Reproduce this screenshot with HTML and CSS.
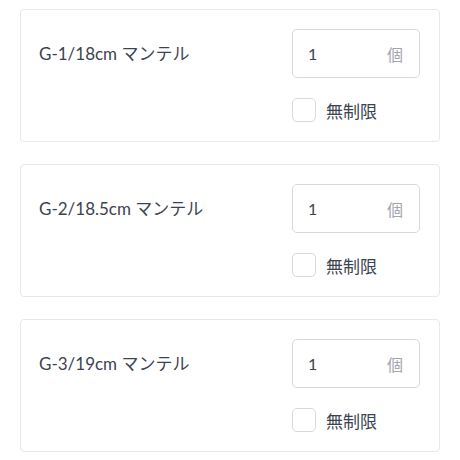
FILE: index.html
```html
<!DOCTYPE html>
<html lang="ja">
<head>
  <meta charset="UTF-8" />
  <meta name="viewport" content="width=device-width, initial-scale=1.0"/>
  <title>在庫設定</title>
  <link rel="stylesheet" href="styles.css">
</head>
<body>

  <div class="item">
    <div class="item-name">G-1/18cm マンテル</div>
    <div class="item-stock">
      <div class="qty"><span class="qty-value">1</span><span class="qty-unit">個</span></div>
      <label class="unlimited"><span class="check"></span>無制限</label>
    </div>
  </div>

  <div class="item">
    <div class="item-name">G-2/18.5cm マンテル</div>
    <div class="item-stock">
      <div class="qty"><span class="qty-value">1</span><span class="qty-unit">個</span></div>
      <label class="unlimited"><span class="check"></span>無制限</label>
    </div>
  </div>

  <div class="item">
    <div class="item-name">G-3/19cm マンテル</div>
    <div class="item-stock">
      <div class="qty"><span class="qty-value">1</span><span class="qty-unit">個</span></div>
      <label class="unlimited"><span class="check"></span>無制限</label>
    </div>
  </div>

</body>
</html>
```

FILE: styles.css
```css
body {
  margin: 0;
  padding: 9px 20px 0 20px;
  background-color: #fff;
  color: #3b4350;
  font-family: Lato, "Noto Sans CJK JP", sans-serif;
}
.item {
  display: flex;
  justify-content: space-between;
  border: 1px solid #e6e8ea;
  border-radius: 4px;
  padding: 19px 19px 19px 18px;
  margin-bottom: 22px;
}
.item-name {
  font-size: 17px;
  line-height: 49px;
}
.item-stock {
  display: flex;
  flex-direction: column;
  gap: 20px;
}
.qty {
  display: flex;
  justify-content: space-between;
  align-items: center;
  box-sizing: border-box;
  width: 128px;
  height: 49px;
  border: 1px solid #d5d9de;
  border-radius: 5px;
  padding: 0 16px 0 15px;
  font-size: 16px;
}
.qty-unit {
  color: #a2a6ac;
}
.unlimited {
  display: flex;
  align-items: center;
  gap: 10px;
  font-size: 17px;
  height: 24px;
}
.check {
  width: 24px;
  height: 24px;
  box-sizing: border-box;
  border: 1px solid #d5d9de;
  border-radius: 5px;
}
```
